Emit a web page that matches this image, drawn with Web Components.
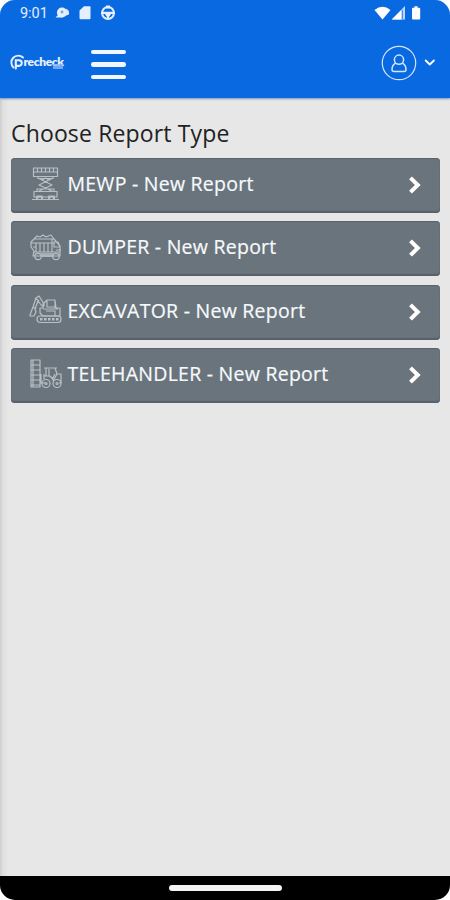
<!DOCTYPE html>
<html lang="en">
<head>
<meta charset="utf-8">
<title>Precheck</title>
<style>
html,body{margin:0;height:100%;background:#fff}
body{font-family:"Open Sans","Noto Sans",sans-serif}
</style>
</head>
<body>
<report-app></report-app>
<script>
const define = (name, html) => customElements.define(name, class extends HTMLElement {
  constructor() {
    super();
    this.attachShadow({ mode: 'open' }).innerHTML = html;
  }
});

define('status-bar', `
<style>
:host{display:flex;align-items:center;height:26px;padding:0 27px 0 20px;color:#e4efff;font:400 14.500px/26px Roboto,sans-serif}
span{width:34px;padding-top:1px;letter-spacing:-.05px}
svg{display:block}
.r{margin-left:auto}
</style>
<span>9:01</span>
<svg width="64" height="18" viewBox="0 0 64 18" fill="#e4efff">
  <circle cx="8" cy="8.500" r="5.100"/><path d="M1.500 13.500l3-3 4 3z"/><path d="M12 4.500l2.500 2L15 9l-2.500 3z"/><circle cx="13.500" cy="9.500" r="1.500"/><circle cx="8" cy="8" r="1.400" fill="#6fa6ef"/>
  <path d="M30 2.300h5.500q1 0 1 1v11q0 1-1 1H26.500q-1 0-1-1V6.500z"/>
  <circle cx="54" cy="9" r="5.900" fill="none" stroke="#e4efff" stroke-width="2"/>
  <path d="M47 7.800h14v2.200H47zM51 10h6l-1.500 2.500h-3zM53 12h2v3h-2zM52 1.500h4v3h-4z"/>
</svg>
<svg class="r" width="49" height="16" viewBox="0 0 49 16" fill="#fff">
  <path d="M.5 5Q8.500-1.500 16.500 5L8.500 14.500z"/>
  <path d="M17.500 14.500L31 1v13.500z" fill="#b9d5fb"/><path d="M18 14.500L27.500 5v9.500z"/><path d="M28.300 5v9" stroke="#2f7ce8" stroke-width="1"/>
  <path d="M40.500 1.200h3v1.500H45q1.200 0 1.200 1V13.500q0 1-1 1H39q-1 0-1-1V3.700q0-1 1-1h1.500z"/>
</svg>`);

define('brand-logo', `
<style>
:host{display:flex;align-items:center;width:54px;height:20px;margin-top:-3px;color:#e6f0ff;font:800 12px/16px Lato,sans-serif;position:relative}
svg{flex:none;display:block}
span{margin:-1px 0 0 -1.500px;letter-spacing:-.35px}
i{position:absolute;left:43px;top:12px;width:10px;height:5px;background:#8bb6f3;opacity:.8}
</style>
<svg width="15" height="20" viewBox="0 0 15 20" fill="none" stroke="#e6f0ff" stroke-linecap="round">
  <path d="M3.500 15.500A6.700 6.700 0 1 1 13 5.500" stroke-width="1.900"/>
  <path d="M5.800 16.500V8.300H9a2.800 2.800 0 0 1 0 5.600H6" stroke-width="2.100"/>
</svg><span>recheck</span><i></i>`);

define('menu-button', `
<style>
:host{display:flex;flex-direction:column;gap:8px;width:35px}
b{display:block;height:4.600px;border-radius:2.300px;background:#f2f7ff}
</style><b></b><b></b><b></b>`);

define('account-menu', `
<style>:host{display:block}svg{display:block}</style>
<svg width="54" height="36" viewBox="0 0 54 36" fill="none" stroke="#d3e5ff" stroke-linecap="round" stroke-linejoin="round">
  <circle cx="18" cy="18" r="16.700" stroke-width="1.200"/>
  <circle cx="18" cy="14.700" r="4.600" stroke-width="1.500"/>
  <path d="M14.200 18.300C11.500 20 11 22 11 24.500Q11 26.500 13 26.500H23Q25 26.500 25 24.500C25 22 24.500 20 21.800 18.300" stroke-width="1.500"/>
  <path d="M44.700 15.500l4.100 4 4.100-4" stroke="#fff" stroke-width="1.800"/>
</svg>`);

define('app-header', `
<style>
:host{display:block;height:98px;background:#0969e1;box-shadow:0 1px 2px #7893c4;position:relative}
div{display:flex;align-items:center;height:72px;box-sizing:border-box;padding:3px 15px 0 10px}
menu-button{margin:2px 0 0 27px}
account-menu{margin:-1px 0 0 auto}
</style>
<status-bar></status-bar>
<div><brand-logo></brand-logo><menu-button></menu-button><account-menu></account-menu></div>`);

const icons = {
  mewp: `<path d="M4.500 2h24v8.500h-24zM4.500 6h24M8.500 2v4M12.500 2v4M16.500 2v4M20.500 2v4M24.500 2v4M9 10.500v2h15v-2M10 12.500L23 19 10 25M23 12.500L10 19 23 25M13 14l3.500-2 3.500 2M5 25.500h23v5.500H5zM8 25v-2h17v2M3 33.500h27"/><path d="M8 33v-2.500h5V33M20 33v-2.500h5V33" stroke-width="2"/>`,
  dumper: `<path d="M2 12l3-3h20l6 7v10H4l1-5-3-4zM5 9l3-3 3 1 3-2 3 2 5-2 3 4M2 13h23M7 13v9M11 13v9M15 13v9M19 13v9M23 9v13M4 22h27M25 12h4l2 5h-6zM4 17h3M27 20h5"/><circle cx="9" cy="26.500" r="3.200"/><circle cx="27" cy="26.500" r="3.200"/><path d="M12 26h12M12 24h12" stroke-width="1.600"/>`,
  excavator: `<path d="M1 22l3-8 3-9 3-2 5 8v2h-2L9 8 6 16l1 3-2 4H1zM4 14l3 2M6 5l4 3M14 15v-4l4-4h8l1 8h4v8H14l-3-3v-5zM18 8v6h8M14 16h15M26 7v8M17 18h9v5"/><rect x="8" y="23" width="24" height="6.500" rx="3"/><path d="M11 26.300h19" stroke-width="2.500" stroke-dasharray="2.500 1.500"/>`,
  telehandler: `<path d="M2 3h9v27H2zM2 8h9M2 13h9M2 18h9M2 23h9M4 3v27M2 28h9v2M12 17v9h4M15 11h13M17 11v8M26 11l2 6h4v9h-2M15 19h6l4 5M20 12v7l4 2 2-4M15 22v-5M28 17l-4 7"/><circle cx="17" cy="26.500" r="4"/><circle cx="28" cy="26.500" r="4"/><circle cx="17" cy="26.500" r="1"/><circle cx="28" cy="26.500" r="1"/>`
};

customElements.define('machine-icon', class extends HTMLElement {
  connectedCallback() {
    this.attachShadow({ mode: 'open' }).innerHTML = `
<style>:host{display:block;width:34px;height:36px;flex:none}svg{display:block}</style>
<svg width="34" height="36" viewBox="0 0 34 36" fill="none" stroke="#b9c0c5" stroke-width="1.200" stroke-linejoin="round">${icons[this.getAttribute('name')]}</svg>`;
  }
});

define('report-row', `
<style>
:host{display:flex;align-items:center;box-sizing:border-box;height:55px;padding:0 18.500px 2px 17.500px;border-radius:4px;background:#6a747c;box-shadow:inset 0 1px 1px #5a646d,inset 0 -2px 1px #56616c;color:#f6fafd;font-size:19.500px;letter-spacing:.25px;line-height:26px;white-space:nowrap}
span{margin:-1px 0 0 5px;-webkit-text-stroke:.2px #f6fafd}
.go{margin:1px 0 0 auto;display:block}
</style>
<slot name="icon"></slot><span><slot></slot></span>
<svg class="go" width="14" height="20" viewBox="0 0 14 20"><path d="M2.500 2.800L9.800 10 2.500 17.200" fill="none" stroke="#fff" stroke-width="4"/></svg>`);

define('report-list', `
<style>
:host{display:block;padding:20px 10px 0 11px}
h1{margin:0 0 9.500px;font:400 23px/30px "Open Sans","Noto Sans",sans-serif;letter-spacing:.15px;color:#222}
div{display:flex;flex-direction:column;gap:8.600px}
</style>
<h1>Choose Report Type</h1>
<div>
  <report-row><machine-icon slot="icon" name="mewp"></machine-icon>MEWP - New Report</report-row>
  <report-row><machine-icon slot="icon" name="dumper"></machine-icon>DUMPER - New Report</report-row>
  <report-row><machine-icon slot="icon" name="excavator"></machine-icon>EXCAVATOR - New Report</report-row>
  <report-row><machine-icon slot="icon" name="telehandler"></machine-icon>TELEHANDLER - New Report</report-row>
</div>`);

define('gesture-bar', `
<style>
:host{display:flex;justify-content:center;align-items:center;height:24px;background:#000}
b{width:113px;height:5.500px;border-radius:3px;background:#f4f4f4}
</style><b></b>`);

define('report-app', `
<style>
:host{display:flex;flex-direction:column;width:450px;height:900px;overflow:hidden;border-radius:15px;background:#e7e7e7}
main{flex:1;background:linear-gradient(90deg,#cdcdcd,#e0e0e0 3px,#e7e7e7 9px)}
</style>
<app-header></app-header>
<main><report-list></report-list></main>
<gesture-bar></gesture-bar>`);
</script>
</body>
</html>
